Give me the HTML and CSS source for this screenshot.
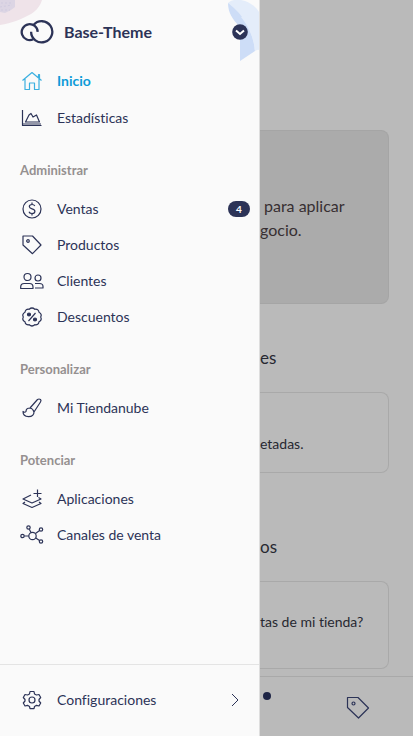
FILE: index.html
```html
<!DOCTYPE html>
<html lang="es">
<head>
<meta charset="utf-8">
<meta name="viewport" content="width=device-width, initial-scale=1">
<title>Base-Theme</title>
<link rel="stylesheet" href="styles.css">
</head>
<body>
<div class="app">
  <aside class="drawer">
    <svg class="shape shape-left" viewBox="0 0 44 28" aria-hidden="true">
      <path fill="#efe3e9" d="M0 0H42C40 6 37 10 31 14C22 19 12 23 0 25Z"/>
      <path fill="#dcd5e4" d="M0 0H15L15 7L11 10L5 13L0 12Z"/>
      <path fill="none" stroke="#d0cbdf" stroke-dasharray="2 2" d="M1 3H13M0 7L12 5M1 10H10"/>
    </svg>
    <svg class="shape shape-right" viewBox="0 0 32 64" aria-hidden="true">
      <path fill="#e4edfa" d="M1 3C5 -1 12 -1 18 1C24 3 29 7 32 12V50L20 46Z"/>
      <path fill="#cdddf7" d="M1 3C1 12 5 19 13 27V61L28 51C26 31 17 15 1 3Z"/>
      <path fill="#e4edfa" d="M14 17C22 27 27 39 28 51L32 49V12Z"/>
    </svg>
    <header class="store">
      <svg class="logo" viewBox="0 0 34 24" fill="none" stroke="#2c3357" stroke-width="2.3" aria-hidden="true">
        <path d="M17.7 11.9A8 8 0 1 0 13.3 19.3"/>
        <path d="M11.1 11.8A10.6 10.6 0 1 0 13.5 5.1"/>
      </svg>
      <h1>Base-Theme</h1>
      <button class="switch" aria-label="Cambiar tienda">
        <svg viewBox="0 0 16 16"><circle cx="8" cy="8" r="7.8" fill="#2c3357"/><path d="M4 6.5L8 10L12 6.5" fill="none" stroke="#fff" stroke-width="2"/></svg>
      </button>
    </header>
    <nav class="menu">
      <ul class="first">
        <li><a class="active" href="#inicio"><svg viewBox="0 0 24 24"><path d="M2.5 11.5L12 3.5L21.5 11.5M5 10V20.5H9.5V14H14.5V20.5H19V10M18.5 8.5V5.5H19.5V9.5"/></svg><span>Inicio</span></a></li>
        <li><a href="#estadisticas"><svg viewBox="0 0 24 24"><path d="M2.5 4V19.5H21.5M2.5 18H21"/><path d="M5.5 16L9 9L11 7.5L13 11L16.5 9L19.5 16Z"/></svg><span>Estadísticas</span></a></li>
      </ul>
      <h2>Administrar</h2>
      <ul>
        <li><a href="#ventas"><svg viewBox="0 0 24 24"><circle cx="12" cy="12" r="9"/><path d="M14.8 9C14.3 7.9 13.3 7.5 12 7.5C10.3 7.5 9.3 8.4 9.3 9.6C9.3 12.6 14.9 11 14.9 14.2C14.9 15.6 13.7 16.5 12 16.5C10.5 16.5 9.4 15.9 9 14.7M12 5.5V7.5M12 16.5V18.5"/></svg><span>Ventas</span><b class="badge">4</b></a></li>
        <li><a href="#productos"><svg viewBox="0 0 24 24"><path d="M3 3H12.5L21 12L12.5 20.7L3 12Z"/><circle cx="8" cy="8" r="1.3"/></svg><span>Productos</span></a></li>
        <li><a href="#clientes"><svg viewBox="0 0 24 24"><circle cx="7.5" cy="8" r="3.5"/><path d="M.7 19.5V18Q.7 14.5 4.2 14.500H9.500Q13 14.500 13 18V19.500ZM15 14.500H19.500Q23 14.500 23 17.500V19H15"/><circle cx="18" cy="9" r="3"/></svg><span>Clientes</span></a></li>
        <li><a href="#descuentos"><svg viewBox="0 0 24 24"><path d="M9.2 4.3Q12 1.7 14.8 4.3Q18.5 3.7 19 7.2Q22.3 9 20.7 12Q22.3 15 19 16.8Q18.5 20.3 14.8 19.7Q12 22.3 9.2 19.7Q5.5 20.3 5 16.8Q1.7 15 3.3 12Q1.7 9 5 7.2Q5.5 3.7 9.2 4.3Z"/><path d="M15.5 8L8.5 16"/><circle class="solid" cx="9" cy="9.5" r="1.5"/><circle class="solid" cx="15" cy="14.5" r="1.5"/></svg><span>Descuentos</span></a></li>
      </ul>
      <h2>Personalizar</h2>
      <ul>
        <li><a href="#tienda"><svg viewBox="0 0 24 24"><path d="M10 12L17.5 3.5Q19 2.5 20.5 3.5Q21.5 4.5 20.5 6L14 16M10 12Q13 12.5 14 16M10 12Q6 12 6 15.5Q5 17 3 15.5Q3 20.5 8.5 20.7Q14 20.5 14 16"/></svg><span>Mi Tiendanube</span></a></li>
      </ul>
      <h2>Potenciar</h2>
      <ul>
        <li><a href="#aplicaciones"><svg viewBox="0 0 24 24"><path d="M11 8L3 12L12 16L21 12L18.5 10.5M5 15L3 16.5L12 20.5L21 16.5L19 15M17.5 2.5V10M13.5 6.5H21.5"/></svg><span>Aplicaciones</span></a></li>
        <li><a href="#canales"><svg viewBox="0 0 24 24"><circle cx="12.5" cy="13" r="3.7"/><circle cx="2.5" cy="13" r="1.7"/><circle cx="8.5" cy="4.5" r="1.7"/><circle cx="21" cy="6.5" r="1.7"/><circle cx="21" cy="18.5" r="1.7"/><path d="M4.2 13H8.8M9.3 6.2L11 9.5M19.6 7.6L15.5 10.5M19.5 17.5L15.8 15"/></svg><span>Canales de venta</span></a></li>
      </ul>
    </nav>
    <footer class="settings">
      <a href="#configuraciones"><svg viewBox="0 0 24 24"><path d="M10 3.5H14L14.5 6L16.5 7L19 6.5L20.7 9.5L19 11.5V13L20.7 15L19 18L16.5 17.3L14.5 18.5L14 20.7H10L9.5 18.5L7.5 17.3L5 18L3.3 15L5 13V11.5L3.3 9.5L5 6.5L7.5 7L9.5 6Z"/><circle cx="12" cy="12" r="3"/></svg><span>Configuraciones</span><svg class="chevron" viewBox="0 0 10 16"><path d="M2 2L8 8L2 14"/></svg></a>
    </footer>
  </aside>
  <div class="page">
    <main>
      <section class="card promo"><p>para aplicar</p><p class="cut">gocio.</p></section>
      <h2>es</h2>
      <section class="card orders"><p>etadas.</p></section>
      <h2>os</h2>
      <section class="card help"><p>tas de mi tienda?</p></section>
    </main>
    <nav class="tabs">
      <a class="tab-sales" href="#ventas" aria-label="Ventas"><i class="dot"></i></a>
      <a class="tab-products" href="#productos" aria-label="Productos"><svg viewBox="0 0 24 24"><path d="M1.5 1.5H12L22.5 12L12.5 22L1.5 11.5Z"/><circle cx="7.5" cy="7.5" r="1.5"/></svg></a>
    </nav>
  </div>
</div>
</body>
</html>
```
FILE: styles.css
```css
* { box-sizing: border-box; }
body, h1, h2, p, ul { margin: 0; padding: 0; }
ul { list-style: none; }
body {
  font-family: Lato, "Liberation Sans", sans-serif;
  font-size: 14px;
  font-variant-ligatures: none;
  line-height: 20px;
  color: #2c3357;
}
a { color: inherit; text-decoration: none; }
svg { display: block; flex: none; }
.app { display: flex; min-height: 100vh; background: #bababa; }

.drawer {
  position: relative;
  display: flex;
  flex-direction: column;
  flex: none;
  width: 260px;
  background: #fafafa;
  border-right: 1px solid #dedede;
}
.shape { position: absolute; top: 0; }
.shape-left { left: 0; width: 44px; }
.shape-right { right: 0; width: 32px; }
.store {
  position: relative;
  display: flex;
  align-items: center;
  height: 63px;
  padding: 0 11px 0 20px;
}
.logo { width: 34px; height: 24px; }
.store h1 {
  flex: 1;
  margin-left: 10px;
  font-size: 16px;
  font-weight: 700;
}
.switch { width: 16px; height: 16px; padding: 0; border: 0; background: none; }

.menu { flex: 1; }
.first { display: grid; gap: 1px; }
.menu a, .settings a {
  display: flex;
  align-items: center;
  gap: 13px;
  height: 36px;
  padding: 0 9px 0 20px;
}
.menu svg, .settings svg, .tabs svg {
  width: 24px;
  height: 24px;
  fill: none;
  stroke: #2c3357;
  stroke-width: 1.2;
  stroke-linejoin: round;
}
.menu .solid { fill: #2c3357; }
.menu span, .settings span { flex: 1; }
.menu .active { color: #0c9bd8; font-weight: 700; }
.menu .active svg { stroke: #3cb0e0; }
.menu h2 {
  padding: 24px 20px 11px;
  font-size: 13px;
  font-weight: 700;
  color: #959090;
}
.badge {
  width: 22px;
  height: 16px;
  border-radius: 8px;
  background: #2c3357;
  color: #fff;
  font-size: 10px;
  line-height: 16px;
  text-align: center;
}
.settings { border-top: 1px solid #e4e4e4; }
.settings a { height: 71px; padding-bottom: 1px; }
.settings .chevron { width: 10px; height: 16px; margin-right: 10px; stroke-width: 1; }

.page { display: flex; flex: 1; flex-direction: column; min-width: 0; }
main { flex: 1; padding: 130px 24px 7px 0; color: #272831; }
.card { border: 1px solid #a9a9a9; border-left: 0; border-radius: 0 8px 8px 0; }
.promo {
  height: 174px;
  padding: 63px 0 0 4px;
  background: #ababab;
  border-color: #a5a5a5;
  color: #372f32;
  font-size: 16px;
  line-height: 24px;
}
.promo .cut { margin-left: -4px; }
main h2 { padding: 42px 0 22px; font-size: 17px; font-weight: 400; line-height: 24px; }
.orders { height: 81px; padding-top: 41px; }
.orders + h2 { padding-top: 62px; }
.help { height: 88px; padding-top: 30px; }
.tabs {
  display: flex;
  align-items: flex-start;
  justify-content: space-between;
  height: 60px;
  padding: 15px 43px 0 3px;
  border-top: 1px solid #a9a9a9;
}
.tab-products { padding-top: 4px; }
.dot { display: block; width: 8px; height: 8px; border-radius: 50%; background: #1e2546; }
```
